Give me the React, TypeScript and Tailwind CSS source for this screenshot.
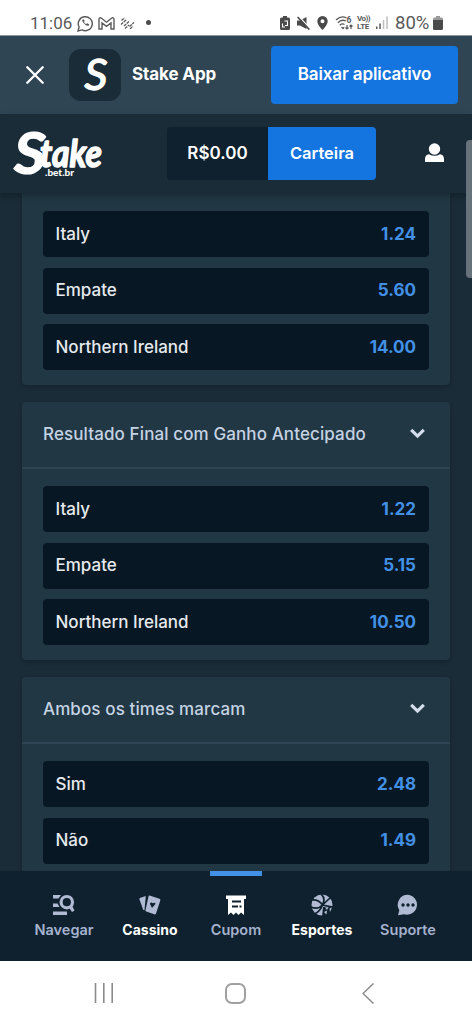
import { ReactNode } from 'react'

interface Outcome {
  name: string
  odds: string
}

interface Market {
  title: string
  outcomes: Outcome[]
}

const mainOutcomes: Outcome[] = [
  { name: 'Italy', odds: '1.24' },
  { name: 'Empate', odds: '5.60' },
  { name: 'Northern Ireland', odds: '14.00' },
]

const markets: Market[] = [
  {
    title: 'Resultado Final com Ganho Antecipado',
    outcomes: [
      { name: 'Italy', odds: '1.22' },
      { name: 'Empate', odds: '5.15' },
      { name: 'Northern Ireland', odds: '10.50' },
    ],
  },
  {
    title: 'Ambos os times marcam',
    outcomes: [
      { name: 'Sim', odds: '2.48' },
      { name: 'Não', odds: '1.49' },
    ],
  },
]

function StatusBar() {
  return (
    <div className="flex h-9 shrink-0 items-start border-b border-[#8b979f] bg-white pl-[30px] pr-[29px] pt-[13px] text-[#5a5a5a]">
      <span className="w-[41px] whitespace-nowrap font-['Roboto'] text-[17px] leading-5">11:06</span>
      <svg className="ml-[6px] mt-[2px]" width="17" height="17" viewBox="0 0 17 17" fill="none" stroke="currentColor" strokeWidth="1.4">
        <path d="M1 16l1.1-4A7 7 0 1 1 5 14.9z" />
        <path d="M5.6 4.6c-1.7 1.5 3.6 7.6 6.2 5.9l.3-1.3-1.8-1-1 .9C8.1 8.6 7.5 7.9 7 6.9l.7-.9-.8-1.6z" fill="currentColor" stroke="none" />
      </svg>
      <svg className="ml-[4px] mt-[4px]" width="17" height="13" viewBox="0 0 17 13" fill="none" stroke="currentColor" strokeWidth="1.4">
        <path d="M1 12V2.3C1 .8 2.5.4 3.5 1.2l5 4 5-4C14.5.4 16 .8 16 2.3V12h-3V6L8.5 9.3 4 6v6z" />
      </svg>
      <svg className="ml-[5px] mt-[4px]" width="15" height="12" viewBox="0 0 15 12" fill="none" stroke="currentColor" strokeWidth="1.3" strokeDasharray="3 .7">
        <path d="M1.5 3.5l3-2.5M1 7.5l5-4.500M4 9l5-4.500M5 11.500l4-3.500M9.500 9.500l4.500-4M10 12l3-3" />
      </svg>
      <span className="ml-[11px] mt-[7px] size-[5px] rounded-full bg-[#4c4c4c]" />

      <div className="ml-auto flex items-start">
        <svg className="mt-[3px]" width="10" height="14" viewBox="0 0 10 14" fill="#4a4a4a">
          <path d="M3 0h4v1.5h1.5Q10 1.5 10 3v9.500Q10 14 8.500 14h-7Q0 14 0 12.500V3q0-1.500 1.500-1.500H3z" />
          <path d="M4.500 5H7.500v4.500H5M2.500 7.500v3.500h2.500" stroke="#fff" fill="none" strokeWidth="1.100" />
        </svg>
        <svg className="ml-[7px] mt-[3px]" width="13" height="14" viewBox="0 0 13 14" fill="#4a4a4a">
          <path d="M0 4.500h3L9.500 1v12L3 9.500H0z" />
          <path d="M1.500 0L13 12.500" stroke="#fff" strokeWidth="1.300" />
          <path d="M.6 1L12.300 13.500" stroke="#4a4a4a" strokeWidth="1.700" />
        </svg>
        <svg className="ml-[7px] mt-[3px]" width="11" height="14" viewBox="0 0 11 14" fill="#4a4a4a">
          <path fillRule="evenodd" d="M5.500 0A5.200 5.200 0 0 1 10.700 5.200C10.700 9 5.500 14 5.500 14S.3 9 .3 5.200A5.200 5.200 0 0 1 5.500 0zm0 3.200a2 2 0 1 0 0 4 2 2 0 0 0 0-4z" />
        </svg>
        <svg className="ml-[7px] mt-[3px]" width="19" height="14" viewBox="0 0 19 14" fill="none" stroke="currentColor" strokeWidth="1.300">
          <path d="M1 4q5.500-5 10.500-2M2.800 6.700q4-3.800 8-1.700M4.800 9.200q2.500-2.200 4.700-.7M6.500 11l1.500 1.500 1.200-1.200" />
          <path d="M12 9v4m-1.500-1.500L12 13l1.500-1.500M16 13V9m-1.500 1.500L16 9l1.500 1.500" strokeWidth="1.200" />
          <text x="11.500" y="7.300" fontSize="8.500" fontWeight="700" fontFamily="Roboto, sans-serif" fill="currentColor" stroke="none">6</text>
        </svg>
        <span className="ml-[3px] mt-[2px] flex w-[14px] flex-col whitespace-nowrap font-['Roboto'] text-[8px] font-bold leading-[8px]">
          <span className="tracking-[-0.5px]">Vo))</span>
          <span className="tracking-[-0.3px]">LTE</span>
        </span>
        <svg className="ml-[5px] mt-[3px]" width="12" height="13" viewBox="0 0 12 13" fill="currentColor">
          <path d="M0 10.500h1.500V13H0zM3.300 7.500h1.500V13H3.300z" />
          <path d="M6.800 4h1.500v9H6.800zM10.300.5h1.500V13h-1.500z" opacity=".4" />
        </svg>
        <span className="ml-[7px] w-[37px] whitespace-nowrap font-['Roboto'] text-[18.5px] leading-5">80%</span>
        <svg className="ml-[1px] mt-[3px]" width="10" height="14" viewBox="0 0 10 14">
          <path d="M3 0h4v1.500h1.500Q10 1.500 10 3v1H0V3q0-1.500 1.500-1.500H3z" fill="#999" />
          <path d="M0 4h10v8.500Q10 14 8.500 14h-7Q0 14 0 12.500z" fill="#4a4a4a" />
        </svg>
      </div>
    </div>
  )
}

function AppBanner() {
  return (
    <div className="flex h-[78px] shrink-0 items-center bg-[#2f4553] pl-[26px] pr-[14px] text-white">
      <svg width="18" height="18" viewBox="0 0 18 18" fill="none" stroke="currentColor" strokeWidth="2.3" strokeLinecap="round">
        <path d="M1.3 1.3l15.4 15.4M16.7 1.3L1.3 16.7" />
      </svg>
      <div className="ml-[25px] flex size-[52px] items-center justify-center rounded-xl bg-[#1a2c38]">
        <svg width="52" height="52" viewBox="0 0 52 52" fill="#fff" stroke="#fff" strokeWidth="1.3" strokeLinejoin="round">
          <text x="15.5" y="41" fontSize="42" fontStyle="italic" fontWeight="400" fontFamily="Lato, sans-serif" textLength="23" lengthAdjust="spacingAndGlyphs">S</text>
        </svg>
      </div>
      <span className="ml-[11px] text-[17px] font-bold tracking-[-0.1px]">Stake App</span>
      <button className="ml-auto h-[58px] w-[187px] rounded bg-[#1475e1] text-[17px] font-semibold tracking-[-0.1px]">
        Baixar aplicativo
      </button>
    </div>
  )
}

function Header() {
  return (
    <header className="relative z-10 flex h-[79px] shrink-0 items-center bg-[#1a2c38] pl-[12px] pr-[28px] text-white shadow-[0_3px_6px_rgba(0,0,0,0.25)]">
      <svg width="96" height="79" viewBox="0 0 96 79" fill="#fff" stroke="#fff" strokeLinejoin="round" fontFamily="Lato, sans-serif">
        <text x="2" y="60" fontSize="58" fontStyle="italic" fontWeight="700" strokeWidth="1.2" textLength="32" lengthAdjust="spacingAndGlyphs">S</text>
        <text x="28" y="53" fontSize="38" fontStyle="italic" fontWeight="700" strokeWidth="1.6" textLength="62" lengthAdjust="spacingAndGlyphs">take</text>
        <text x="33" y="62" fontSize="9" fontWeight="900" stroke="none" textLength="29" lengthAdjust="spacingAndGlyphs">.bet.br</text>
      </svg>
      <div className="ml-[59px] flex h-[53px] overflow-hidden rounded">
        <div className="flex w-[101px] items-center justify-center bg-[#0f212e] text-[17px] font-semibold">R$0.00</div>
        <button className="w-[108px] bg-[#1475e1] text-[16.500px] font-semibold">Carteira</button>
      </div>
      <svg className="-mt-[2px] ml-auto" width="19" height="19" viewBox="0 0 19 19" fill="currentColor">
        <circle cx="9.500" cy="6" r="5.700" />
        <path d="M0 19v-2.500Q0 11.500 4 11.300q5.500 3 11 0 4 .2 4 5.200V19z" />
      </svg>
    </header>
  )
}

function OutcomeList({ outcomes }: { outcomes: Outcome[] }) {
  return (
    <div className="flex flex-col gap-[10.5px] pb-[15px] pl-[20.5px] pr-[21px]">
      {outcomes.map((outcome) => (
        <button key={outcome.name} className="flex h-[46px] items-center justify-between rounded bg-[#071824] px-[13px] pt-[1px] text-left">
          <span className="text-[17px] font-medium text-[#e6eaee]">{outcome.name}</span>
          <span className="text-[17px] font-bold text-[#4391e7]">{outcome.odds}</span>
        </button>
      ))}
    </div>
  )
}

function MarketCard({ market }: { market: Market }) {
  return (
    <section className="rounded bg-[#213743] shadow-[0_2px_4px_rgba(0,0,0,0.2)]">
      <div className="mb-[17.5px] flex h-[67px] items-center justify-between border-b-2 border-[#2f4553] pl-[21px] pr-[25px]">
        <h2 className="mt-[2px] text-[17px] font-medium tracking-[0.11px] text-[#c5d3e4]">{market.title}</h2>
        <svg className="-mt-[2px]" width="15" height="11" viewBox="0 0 15 11" fill="none" stroke="#d5dceb" strokeWidth="3.2">
          <path d="M1.2 1.8l6.3 6.3 6.300-6.300" />
        </svg>
      </div>
      <OutcomeList outcomes={market.outcomes} />
    </section>
  )
}

function NavItem({ label, active, strong, children }: { label: string; active?: boolean; strong?: boolean; children: ReactNode }) {
  return (
    <button className="flex w-[86px] flex-col items-center">
      <span className={active ? 'h-[5px] w-[52px] bg-[#4391e7]' : 'h-[5px] w-[52px]'} />
      <svg className="mt-[18px]" width="22" height="22" viewBox="0 0 22 22" fill={active ? '#fff' : '#b1bad3'}>
        {children}
      </svg>
      <span className={strong ? 'mt-[4px] text-[14px] font-bold leading-5 text-white' : 'mt-[4px] text-[14.5px] font-semibold leading-5 text-[#a5b2ce]'}>
        {label}
      </span>
    </button>
  )
}

function BottomNav() {
  return (
    <nav className="relative z-10 flex h-[90px] shrink-0 items-start justify-center bg-[#0f212e]">
      <NavItem label="Navegar">
        <path d="M0 1h8L5.5 4.5H0zM0 9.500h4.500L6.500 13H0zM0 17.500h14V21H0z" />
        <circle cx="13.800" cy="8.200" r="5.700" fill="none" stroke="#b1bad3" strokeWidth="3.200" />
        <path d="M16 13.500l3-2 2.500 5-2.500 1.500z" />
      </NavItem>
      <NavItem label="Cassino" strong>
        <path d="M.8 4l6-2L5.500 16Q4.500 16.500 4 15.300L.5 5.500Q.2 4.500.8 4z" />
        <path d="M10.500 1.500l10 3.300q1.200.5.8 1.700l-4.300 13q-.5 1.200-1.700.8l-8-2.700q-1.200-.5-.8-1.700l3-13.500q.2-1 1-.9z" />
        <path d="M13 14l-2-4q0-2 1.800-1.500l.8.8q2.800-1.500 2.800.8z" fill="#0f212e" />
      </NavItem>
      <NavItem label="Cupom" active>
        <path d="M1 1.500h20V5h-2v16l-3-2.500-2.500 2.500-2.500-2.500L8.500 21 6 18.500 3 21V5H1z" />
        <path d="M7 7.500h9M7 12.500h6M14.500 12.500h2" stroke="#0f212e" strokeWidth="1.800" />
      </NavItem>
      <NavItem label="Esportes" strong>
        <circle cx="11" cy="11" r="10.500" />
        <path d="M10 0q5 4 1.500 11-2 6-8 9M0 6q8-1 11.500 5M0 13q7 3 11.500-2L20 3M11.500 11l10 2" fill="none" stroke="#0f212e" strokeWidth="1.700" />
        <path d="M12 13l11-1v11H11z" fill="#0f212e" />
        <path d="M14 13.500l3.500-.5-1.500 3zM18.500 14.500l2.500-1-2 4.500zM13 18l3-1.500-.5 4z" />
      </NavItem>
      <NavItem label="Suporte">
        <path d="M11 .8a10 10 0 1 1-4 19.500L1 21.200l1.300-5A10 10 0 0 1 11 .8z" />
        <circle cx="6" cy="11" r="1.700" fill="#0f212e" />
        <circle cx="11" cy="11" r="1.700" fill="#0f212e" />
        <circle cx="16" cy="11" r="1.700" fill="#0f212e" />
      </NavItem>
    </nav>
  )
}

function SystemBar() {
  return (
    <div className="flex h-[63px] shrink-0 items-center bg-white pl-[94px] pt-[1px] text-[#8b8b8b]">
      <svg width="20" height="20" viewBox="0 0 20 20" stroke="currentColor" strokeWidth="1.6">
        <path d="M1.5 0v20M9.800 0v20M18.200 0v20" />
      </svg>
      <div className="ml-[111px] size-[21px] rounded-[7px] border-2 border-[#a0a0a0]" />
      <svg className="ml-[116px]" width="12" height="21" viewBox="0 0 12 21" fill="none" stroke="currentColor" strokeWidth="1.5">
        <path d="M11.500.5L1 10.500l10.500 10" />
      </svg>
    </div>
  )
}

export default function App() {
  return (
    <div className="relative flex h-[1024px] w-[472px] flex-col overflow-hidden bg-[#1a2c38] font-['Inter',sans-serif]">
      <StatusBar />
      <AppBanner />
      <Header />
      <main className="flex min-h-0 flex-1 flex-col gap-[16.5px] overflow-hidden px-[22px]">
        <section className="shrink-0 rounded-b bg-[#213743] pt-[18px] shadow-[0_2px_4px_rgba(0,0,0,0.2)]">
          <OutcomeList outcomes={mainOutcomes} />
        </section>
        {markets.map((market) => (
          <MarketCard key={market.title} market={market} />
        ))}
      </main>
      <BottomNav />
      <SystemBar />
      {/* scroll thumb */}
      <div className="absolute right-0 top-[140px] z-20 h-[138px] w-[6px] rounded-l bg-[#67737b]" />
    </div>
  )
}
